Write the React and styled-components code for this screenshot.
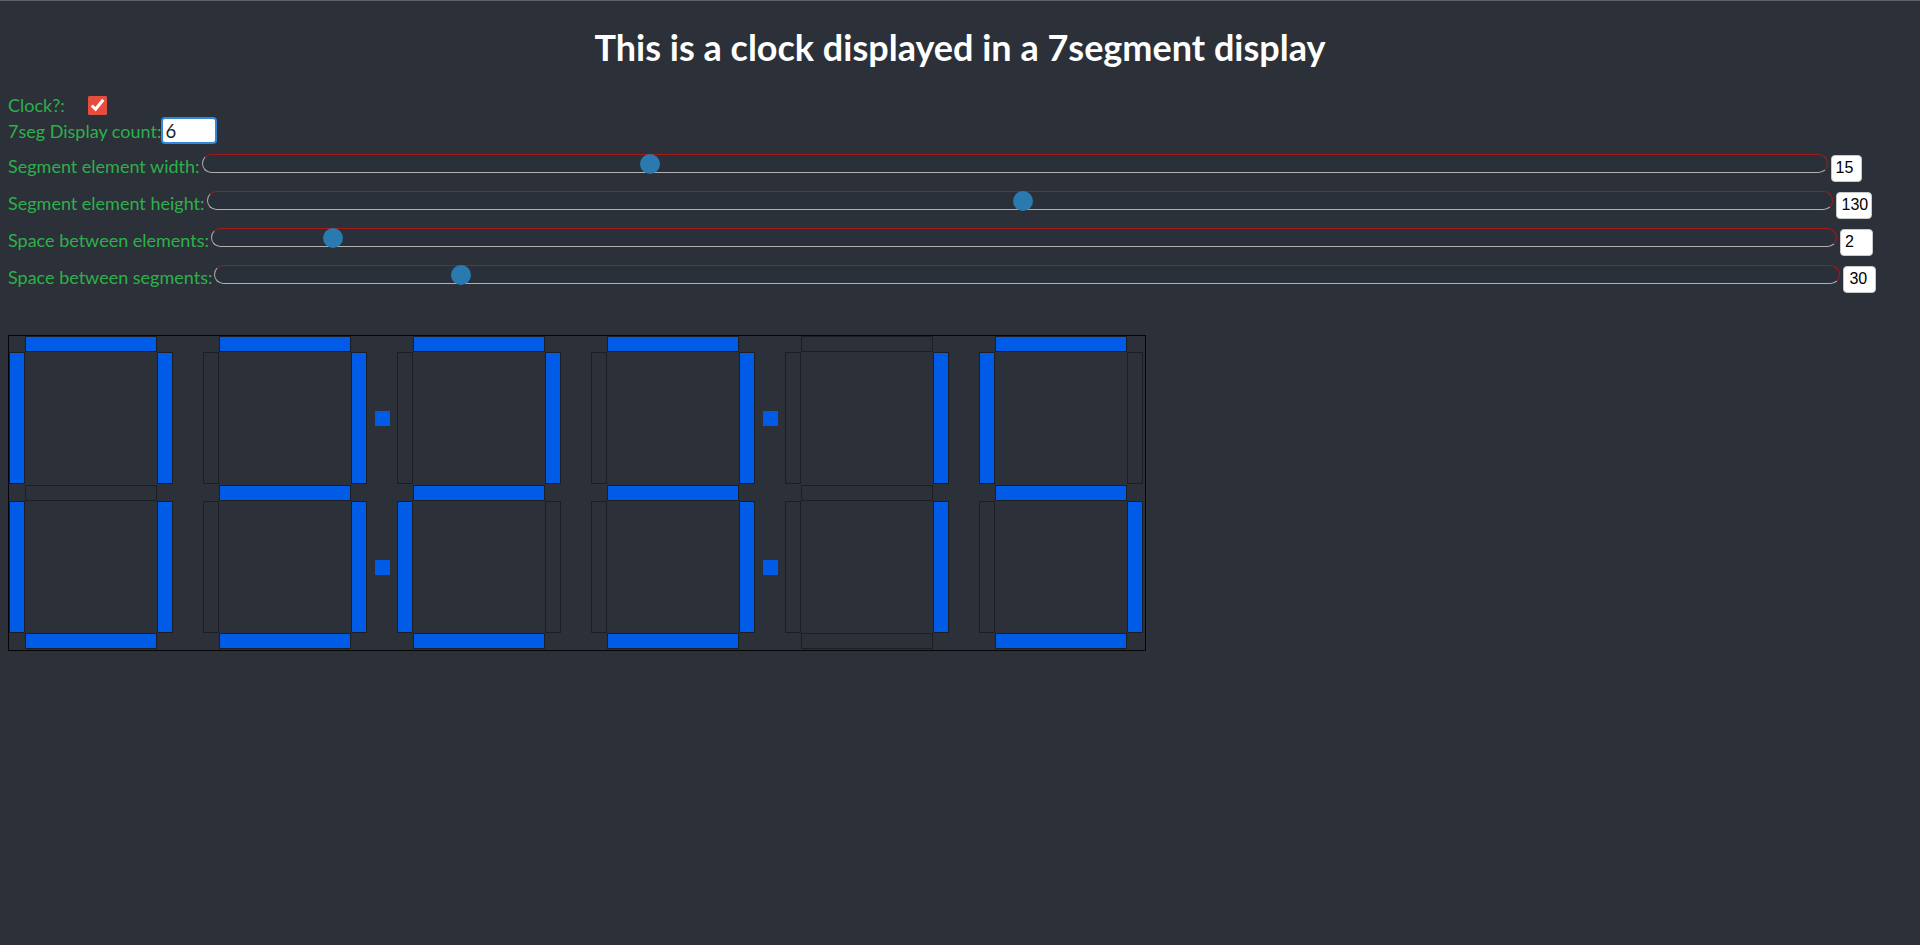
import React from 'react';
import styled, { createGlobalStyle } from 'styled-components';

const GlobalStyle = createGlobalStyle`
  html, body { margin: 0; padding: 0; background: #2c3038; }
  body { font-family: Lato, "Open Sans", sans-serif; }
  * { box-sizing: border-box; }
`;

const Page = styled.div`
  min-height: 100vh;
  border-top: 1px solid #5d6066;
  padding: 0 8px;
  background: #2c3038;
`;

const Title = styled.h1`
  margin: 0;
  padding: 26px 0 26px;
  font-size: 36px;
  line-height: 40px;
  font-weight: 700;
  color: #ffffff;
  text-align: center;
`;

const Controls = styled.div`
  display: flex;
  flex-direction: column;
`;

const ToggleRow = styled.div`
  display: flex;
  align-items: center;
  height: 24px;
`;

const Row = styled.div`
  display: flex;
  align-items: baseline;
  height: 37px;
`;

const Label = styled.span`
  color: #2db04b;
  font-size: 18px;
  white-space: nowrap;
`;

const Check = styled.input.attrs({ type: 'checkbox' })`
  width: 19px;
  height: 19px;
  margin: 0 0 0 23px;
  accent-color: #e74c3c;
`;

const CountInput = styled.input.attrs({ type: 'text' })`
  width: 56px;
  height: 27px;
  margin: 0;
  padding: 0 2px;
  border: 2px solid #2f88da;
  border-radius: 4px;
  background: #ffffff;
  color: #1a1f2b;
  font-family: Lato, "Open Sans", sans-serif;
  font-size: 18.5px;
  outline: none;
`;

const Range = styled.input.attrs({ type: 'range' })`
  -webkit-appearance: none;
  appearance: none;
  width: 1626px;
  height: 19px;
  margin: 0 2px;
  padding: 0;
  border: 1px solid;
  border-color: #a31a1a #a31a1a #b0b0b0 #b0b0b0;
  border-radius: 10px;
  background: #29303a;
  outline: none;

  &::-webkit-slider-thumb {
    -webkit-appearance: none;
    appearance: none;
    width: 20px;
    height: 20px;
    border: none;
    border-radius: 50%;
    background: #2a7ab0;
  }
`;

const NumberBox = styled.input.attrs({ type: 'number' })`
  width: ${(p) => p.$w}px;
  height: 27px;
  margin: 0 0 0 1px;
  padding: 0 0 0 ${(p) => p.$pad}px;
  border: 1px solid #c9c9c9;
  border-radius: 4px;
  background: #ffffff;
  color: #000000;
  font-family: "Liberation Sans", Arial, sans-serif;
  font-size: 16px;
  outline: none;
  -moz-appearance: textfield;

  &::-webkit-inner-spin-button,
  &::-webkit-outer-spin-button {
    -webkit-appearance: none;
    margin: 0;
  }
`;

const Display = styled.div`
  display: flex;
  width: fit-content;
  margin-top: 33px;
  padding: 0 2px 1px 0;
  border: 1px solid #050505;
`;

const Digit = styled.div`
  display: grid;
  grid-template-columns: 16px 132px 16px;
  grid-template-rows: 16px 133px 16px 132px 16px;
`;

const Segment = styled.div`
  grid-column: ${(p) => p.$col};
  grid-row: ${(p) => p.$row};
  align-self: start;
  width: ${(p) => (p.$vertical ? 16 : 132)}px;
  height: ${(p) => (p.$vertical ? 132 : 16)}px;
  border: 1px solid #1b1e23;
  background: ${(p) => (p.$on ? '#005ce6' : 'transparent')};
`;

const Separator = styled.div`
  width: 30px;
  display: grid;
  grid-template-rows: 16px 133px 16px 132px 16px;
  justify-items: center;
  align-items: center;
`;

const Dot = styled.div`
  grid-row: ${(p) => p.$row};
  width: 15px;
  height: 15px;
  background: #005ce6;
`;

const SEGMENTS = [
  { key: 'a', col: 2, row: 1, vertical: false },
  { key: 'f', col: 1, row: 2, vertical: true },
  { key: 'b', col: 3, row: 2, vertical: true },
  { key: 'g', col: 2, row: 3, vertical: false },
  { key: 'e', col: 1, row: 4, vertical: true },
  { key: 'c', col: 3, row: 4, vertical: true },
  { key: 'd', col: 2, row: 5, vertical: false },
];

const DIGIT_MAP = {
  0: 'abcdef',
  1: 'bc',
  2: 'abdeg',
  3: 'abcdg',
  4: 'bcfg',
  5: 'acdfg',
  6: 'acdefg',
  7: 'abc',
  8: 'abcdefg',
  9: 'abcdfg',
};

const SLIDERS = [
  { label: 'Segment element width:', value: 15, max: 55, w: 31, pad: 4 },
  { label: 'Segment element height:', value: 130, max: 259, w: 36, pad: 5 },
  { label: 'Space between elements:', value: 2, max: 29, w: 33, pad: 4 },
  { label: 'Space between segments:', value: 30, max: 204, w: 33, pad: 5 },
];

function SevenSeg({ value }) {
  const lit = DIGIT_MAP[value];
  return (
    <Digit>
      {SEGMENTS.map((s) => (
        <Segment
          key={s.key}
          $col={s.col}
          $row={s.row}
          $vertical={s.vertical}
          $on={lit.includes(s.key)}
        />
      ))}
    </Digit>
  );
}

export default function App() {
  const digits = [0, 3, 2, 3, 1, 5];
  return (
    <Page>
      <GlobalStyle />
      <Title>This is a clock displayed in a 7segment display</Title>
      <Controls>
        <ToggleRow>
          <Label>Clock?:</Label>
          <Check defaultChecked />
        </ToggleRow>
        <Row>
          <Label>7seg Display count:</Label>
          <CountInput defaultValue="6" />
        </Row>
        {SLIDERS.map((s) => (
          <Row key={s.label}>
            <Label>{s.label}</Label>
            <Range min={0} max={s.max} defaultValue={s.value} />
            <NumberBox $w={s.w} $pad={s.pad} defaultValue={s.value} />
          </Row>
        ))}
      </Controls>
      <Display>
        {digits.map((d, i) => (
          <React.Fragment key={i}>
            {i > 0 && (
              <Separator>
                {(i === 2 || i === 4) && (
                  <>
                    <Dot $row={2} />
                    <Dot $row={4} />
                  </>
                )}
              </Separator>
            )}
            <SevenSeg value={d} />
          </React.Fragment>
        ))}
      </Display>
    </Page>
  );
}
